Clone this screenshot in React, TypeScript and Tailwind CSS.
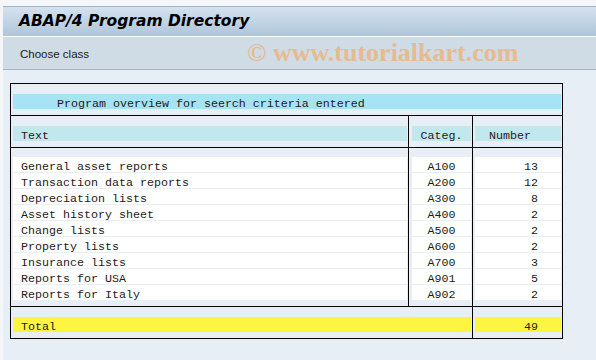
const rows = [
  { text: "General asset reports", cat: "A100", num: 13 },
  { text: "Transaction data reports", cat: "A200", num: 12 },
  { text: "Depreciation lists", cat: "A300", num: 8 },
  { text: "Asset history sheet", cat: "A400", num: 2 },
  { text: "Change lists", cat: "A500", num: 2 },
  { text: "Property lists", cat: "A600", num: 2 },
  { text: "Insurance lists", cat: "A700", num: 3 },
  { text: "Reports for USA", cat: "A901", num: 5 },
  { text: "Reports for Italy", cat: "A902", num: 2 },
];

const mono = "font-['Liberation_Mono','Courier_New',monospace] text-[11.67px] text-[#1e1a1a]";

export default function App() {
  const total = rows.reduce((s, r) => s + r.num, 0);

  return (
    <div className="w-[596px] h-[360px] flex flex-col bg-[#f4f6fa] font-['Liberation_Sans',Arial,sans-serif] overflow-hidden">
      <div className="h-[6px] shrink-0" />
      <div className="flex flex-1 min-h-0">
        <div className="w-[3px] shrink-0" />
        <div className="flex-1 flex flex-col bg-[#e8eef5]">
          {/* title bar */}
          <div className="h-[31px] border-t border-[#a2b2c6] border-b border-b-white bg-gradient-to-b from-[#d4e2ef] to-[#afc5da] flex items-center pl-[16px]">
            <span className="text-[15.5px] font-bold italic text-black leading-none font-['DejaVu_Sans',Verdana,sans-serif]">
              ABAP/4 Program Directory
            </span>
          </div>
          {/* toolbar */}
          <div className="h-[33px] bg-[#cfdce6] border-b border-[#a6b5c8] flex items-center pl-[17px] pt-[3px] relative">
            <span className="text-[11.5px] text-[#1a1a1a]">Choose class</span>
            <span className="absolute left-[244px] top-[0px] text-[26px] font-bold font-['Liberation_Serif','Times_New_Roman',serif] text-[#e9b888] opacity-90 leading-[32px]">
              © www.tutorialkart.com
            </span>
          </div>

          {/* list */}
          <div className="pl-[7px] pt-[13px]">
            <div className={`w-[553px] border border-black ${mono}`}>
              <div className="pt-[10px] pb-[6px] pl-[2px] pr-[1px] border-b border-black">
                <div className="h-[15px] bg-[#a7e4f3] pl-[44px] leading-[20px]">
                  Program overview for seerch criteria entered
                </div>
              </div>

              <div className="grid grid-cols-[397px_1px_63px_1px_89px] border-b border-black">
                <div className="pt-[10px] pb-[6px] pl-[2px] pr-[1px]">
                  <div className="h-[15px] bg-[#c1e8ed] pl-[8px] leading-[20px]">Text</div>
                </div>
                <div className="bg-black" />
                <div className="pt-[10px] pb-[6px] pl-[3px] pr-[1px]">
                  <div className="h-[15px] bg-[#c1e8ed] text-center leading-[20px]">Categ.</div>
                </div>
                <div className="bg-black" />
                <div className="pt-[10px] pb-[6px] pl-[2px] pr-[1px]">
                  <div className="h-[15px] bg-[#c1e8ed] pl-[14px] leading-[20px]">Number</div>
                </div>
              </div>

              <div className="grid grid-cols-[397px_1px_63px_1px_89px] border-b border-black">
                <div className="pt-[9px] pb-[6px] pl-[2px] pr-[1px] flex flex-col gap-[1px]">
                  {rows.map((r) => (
                    <div key={r.cat} className="h-[15px] bg-white pl-[8px] leading-[20px]">
                      {r.text}
                    </div>
                  ))}
                </div>
                <div className="bg-black" />
                <div className="pt-[9px] pb-[6px] pl-[3px] pr-[1px] flex flex-col gap-[1px]">
                  {rows.map((r) => (
                    <div key={r.cat} className="h-[15px] bg-white text-center leading-[20px]">
                      {r.cat}
                    </div>
                  ))}
                </div>
                <div className="bg-black" />
                <div className="pt-[9px] pb-[6px] pl-[2px] pr-[1px] flex flex-col gap-[1px]">
                  {rows.map((r) => (
                    <div key={r.cat} className="h-[15px] bg-white text-right pr-[23px] leading-[20px]">
                      {r.num}
                    </div>
                  ))}
                </div>
              </div>

              <div className="grid grid-cols-[461px_1px_89px]">
                <div className="pt-[10px] pb-[6px] pl-[2px] pr-[1px]">
                  <div className="h-[15px] bg-[#fff540] pl-[8px] leading-[20px]">Total</div>
                </div>
                <div className="bg-black" />
                <div className="pt-[10px] pb-[6px] pl-[2px] pr-[1px]">
                  <div className="h-[15px] bg-[#fff540] text-right pr-[23px] leading-[20px]">{total}</div>
                </div>
              </div>
            </div>
          </div>
        </div>
      </div>
    </div>
  );
}
